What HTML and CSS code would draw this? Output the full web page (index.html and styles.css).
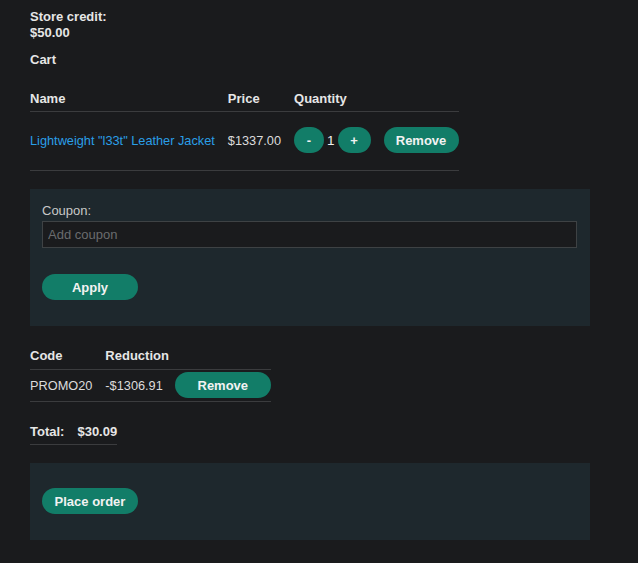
FILE: index.html
```html
<!DOCTYPE html>
<html lang="en">
<head>
<meta charset="utf-8">
<title>Cart</title>
<link rel="stylesheet" href="styles.css">
</head>
<body>
<main class="page">
  <p class="credit"><strong>Store credit:</strong><br><strong>$50.00</strong></p>
  <p class="cart-title">Cart</p>

  <table class="cart-table">
    <thead>
      <tr><th>Name</th><th>Price</th><th>Quantity</th><th></th></tr>
    </thead>
    <tbody>
      <tr>
        <td><a class="product-link" href="#">Lightweight "l33t" Leather Jacket</a></td>
        <td>$1337.00</td>
        <td class="qty">
          <button class="btn btn-minus" type="button">-</button>
          <span class="qty-value">1</span>
          <button class="btn btn-plus" type="button">+</button>
        </td>
        <td><button class="btn btn-remove" type="button">Remove</button></td>
      </tr>
    </tbody>
  </table>

  <form class="panel coupon-panel">
    <label class="coupon-label" for="coupon">Coupon:</label>
    <input class="coupon-input" id="coupon" type="text" placeholder="Add coupon">
    <button class="btn btn-wide" type="button">Apply</button>
  </form>

  <table class="coupon-table">
    <thead>
      <tr><th>Code</th><th class="reduction-head">Reduction</th><th></th></tr>
    </thead>
    <tbody>
      <tr>
        <td>PROMO20</td>
        <td>-$1306.91</td>
        <td><button class="btn btn-wide" type="button">Remove</button></td>
      </tr>
    </tbody>
  </table>

  <table class="total-table">
    <tr><th>Total:</th><th>$30.09</th></tr>
  </table>

  <form class="panel order-panel">
    <button class="btn btn-wide" type="button">Place order</button>
  </form>
</main>
</body>
</html>
```

FILE: styles.css
```css
html, body {
  margin: 0;
  background: #1a1b1d;
}

body {
  font-family: "Liberation Sans", Arial, sans-serif;
  font-size: 13px;
  color: #dcdcdc;
}

.page {
  padding: 9px 48px 0 30px;
}

.credit {
  margin: 0;
  line-height: 16px;
  color: #e6e6e6;
}

.cart-title {
  margin: 11px 0 0;
  line-height: 16px;
  font-weight: bold;
  color: #e6e6e6;
}

table {
  border-collapse: collapse;
  border-spacing: 0;
}

th {
  text-align: left;
  font-weight: bold;
  color: #e6e6e6;
}

th, td {
  padding: 0 13px 0 0;
}

td {
  font-size: 12.75px;
}

th:last-child, td:last-child {
  padding-right: 0;
}

/* cart items */
.cart-table {
  margin-top: 22px;
}

.cart-table thead tr {
  border-bottom: 1px solid #3b3c3e;
}

.cart-table th {
  padding-top: 1px;
  padding-bottom: 4px;
  line-height: 16px;
}

.cart-table tbody tr {
  border-bottom: 1px solid #3b3c3e;
}

.cart-table td {
  padding-top: 15px;
  padding-bottom: 17px;
  white-space: nowrap;
}

.product-link {
  color: #2a9fe8;
  text-decoration: none;
}

.qty {
  display: flex;
  align-items: center;
  gap: 3px;
}

.qty-value {
  color: #f0f0f0;
  font-size: 13.5px;
}

/* buttons */
.btn {
  border: 0;
  border-radius: 14px;
  background: #127d68;
  color: #f2f2f2;
  font-family: "Liberation Sans", Arial, sans-serif;
  font-size: 13px;
  font-weight: bold;
  height: 26px;
  padding: 0;
  cursor: pointer;
}

.btn-minus { width: 30px; }
.btn-plus { width: 33px; }
.btn-remove { width: 75px; }
.btn-wide { width: 96px; }

/* coupon and order panels */
.panel {
  background: #1e282d;
  width: 560px;
  box-sizing: border-box;
}

.coupon-panel {
  margin-top: 18px;
  padding: 14px 13px 26px 12px;
  display: flex;
  flex-direction: column;
  align-items: flex-start;
}

.coupon-label {
  color: #c8c8c8;
  line-height: 16px;
}

.coupon-input {
  margin-top: 2px;
  width: 100%;
  height: 27px;
  box-sizing: border-box;
  background: #1a1b1d;
  border: 1px solid #3e4244;
  color: #cccccc;
  font-family: "Liberation Sans", Arial, sans-serif;
  font-size: 13px;
  padding: 0 5px;
  outline: none;
}

.coupon-input::placeholder {
  color: #6a6c6e;
}

.coupon-panel .btn {
  margin-top: 26px;
}

.coupon-table {
  margin-top: 22px;
}

.coupon-table thead tr,
.coupon-table tbody tr {
  border-bottom: 1px solid #3b3c3e;
}

.coupon-table th {
  padding-bottom: 5px;
  line-height: 16px;
}

.coupon-table .reduction-head {
  padding-right: 0;
}

.coupon-table td {
  padding-top: 2px;
  padding-bottom: 3px;
  white-space: nowrap;
}

.coupon-table td:nth-child(2) {
  padding-right: 12px;
}

.total-table {
  margin-top: 22px;
}

.total-table tr {
  border-bottom: 1px solid #3b3c3e;
}

.total-table th {
  padding-bottom: 4px;
  line-height: 16px;
}

.order-panel {
  margin-top: 18px;
  padding: 25px 12px 26px;
}
```
